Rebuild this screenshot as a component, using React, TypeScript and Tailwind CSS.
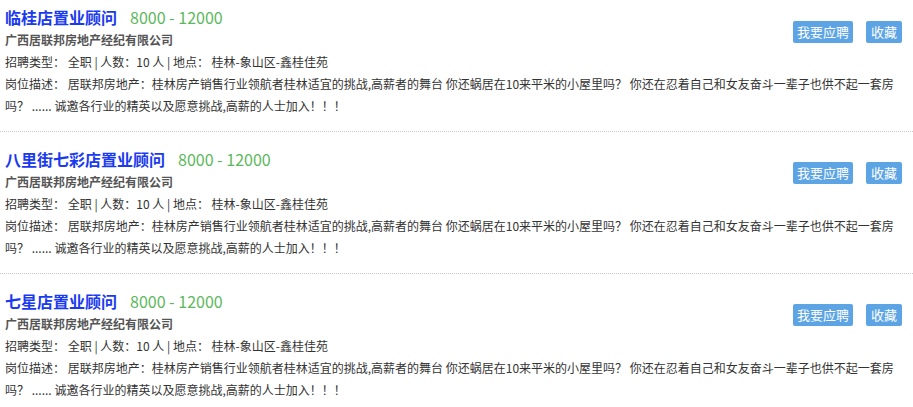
import React from "react";

const jobs = [
  { title: "临桂店置业顾问", first: true },
  { title: "八里街七彩店置业顾问", first: false },
  { title: "七星店置业顾问", first: false },
];

function Card({ title, first }: { title: string; first: boolean }) {
  return (
    <div
      className={`relative flex border-b border-dotted border-[#c8c8c8] pl-[5px] pr-[11px] pb-[14px] ${
        first ? "pt-[5px]" : "pt-[15px]"
      }`}
    >
      <div className="flex-1 min-w-0">
        <div className="flex items-center h-[24px]">
          <span className="text-[16px] font-bold text-[#1a3af0] leading-[24px]">{title}</span>
          <span className="ml-[13px] text-[16px] text-[#5cb85c] leading-[24px]">8000 - 12000</span>
        </div>
        <div className="h-[22px] leading-[22px] text-[12px] font-bold text-[#555]">
          广西居联邦房地产经纪有限公司
        </div>
        <div className="h-[22px] leading-[22px] text-[12px] text-[#333]">
          招聘类型： 全职 | 人数：10 人 | 地点： 桂林-象山区-鑫桂佳苑
        </div>
        <div className="leading-[22px] text-[12px] text-[#333] pr-[2px]">
          岗位描述： 居联邦房地产：桂林房产销售行业领航者桂林适宜的挑战,高薪者的舞台 你还蜗居在10来平米的小屋里吗？ 你还在忍着自己和女友奋斗一辈子也供不起一套房吗？ ...... 诚邀各行业的精英以及愿意挑战,高薪的人士加入！！！
        </div>
      </div>
      <div className={`absolute right-[11px] flex gap-[13px] ${first ? "top-[21px]" : "top-[30px]"}`}>
        <button className="h-[22px] w-[60px] rounded-[2px] bg-[#5da4e4] text-white text-[13px] leading-[22px]">
          我要应聘
        </button>
        <button className="h-[22px] w-[36px] rounded-[2px] bg-[#5da4e4] text-white text-[13px] leading-[22px]">
          收藏
        </button>
      </div>
    </div>
  );
}

export default function App() {
  return (
    <div
      className="w-[913px] h-[407px] overflow-hidden bg-white"
      style={{ fontFamily: '"Noto Sans CJK SC", "Noto Sans", sans-serif' }}
    >
      {jobs.map((j) => (
        <Card key={j.title} title={j.title} first={j.first} />
      ))}
    </div>
  );
}
